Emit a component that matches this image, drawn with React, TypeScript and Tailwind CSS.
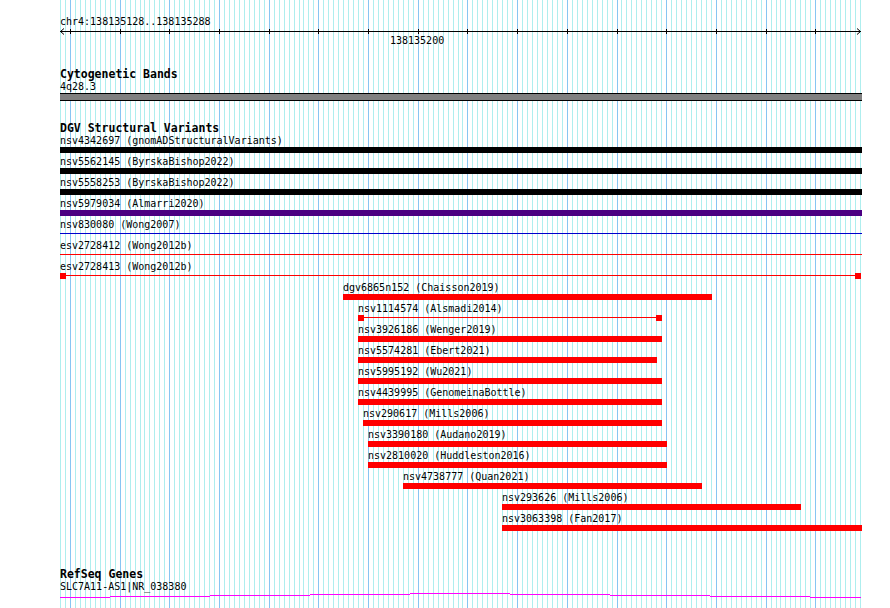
import React from 'react';

const VIEW_LEFT = 60;
const PX_PER_BP = 800 / 161;

// one vertical line per base, a darker one every 10 bp
const gridLines = Array.from({ length: 162 }, (_, k) => ({
  x: VIEW_LEFT + Math.round(k * PX_PER_BP),
  major: k % 10 === 2,
}));

type Feature = {
  name: string;
  source: string;
  start: number;
  end: number;
  color: string;
  style: 'bar' | 'line' | 'ends';
};

const variants: Feature[] = [
  { name: 'nsv4342697', source: 'gnomADStructuralVariants', start: 60, end: 862, color: '#000000', style: 'bar' },
  { name: 'nsv5562145', source: 'ByrskaBishop2022', start: 60, end: 862, color: '#000000', style: 'bar' },
  { name: 'nsv5558253', source: 'ByrskaBishop2022', start: 60, end: 862, color: '#000000', style: 'bar' },
  { name: 'nsv5979034', source: 'Almarri2020', start: 60, end: 862, color: '#4b0082', style: 'bar' },
  { name: 'nsv830080', source: 'Wong2007', start: 60, end: 862, color: '#0000cd', style: 'line' },
  { name: 'esv2728412', source: 'Wong2012b', start: 60, end: 862, color: '#ff0000', style: 'line' },
  { name: 'esv2728413', source: 'Wong2012b', start: 60, end: 861, color: '#ff0000', style: 'ends' },
  { name: 'dgv6865n152', source: 'Chaisson2019', start: 343, end: 712, color: '#ff0000', style: 'bar' },
  { name: 'nsv1114574', source: 'Alsmadi2014', start: 358, end: 662, color: '#ff0000', style: 'ends' },
  { name: 'nsv3926186', source: 'Wenger2019', start: 358, end: 662, color: '#ff0000', style: 'bar' },
  { name: 'nsv5574281', source: 'Ebert2021', start: 358, end: 657, color: '#ff0000', style: 'bar' },
  { name: 'nsv5995192', source: 'Wu2021', start: 358, end: 662, color: '#ff0000', style: 'bar' },
  { name: 'nsv4439995', source: 'GenomeinaBottle', start: 358, end: 662, color: '#ff0000', style: 'bar' },
  { name: 'nsv290617', source: 'Mills2006', start: 363, end: 662, color: '#ff0000', style: 'bar' },
  { name: 'nsv3390180', source: 'Audano2019', start: 368, end: 667, color: '#ff0000', style: 'bar' },
  { name: 'nsv2810020', source: 'Huddleston2016', start: 368, end: 667, color: '#ff0000', style: 'bar' },
  { name: 'nsv4738777', source: 'Quan2021', start: 403, end: 702, color: '#ff0000', style: 'bar' },
  { name: 'nsv293626', source: 'Mills2006', start: 502, end: 801, color: '#ff0000', style: 'bar' },
  { name: 'nsv3063398', source: 'Fan2017', start: 502, end: 862, color: '#ff0000', style: 'bar' },
];

// RefSeq intron line, drawn as the browser draws it: flat steps
const geneSteps: [number, number, number][] = [
  [60, 110, 5], [110, 210, 4], [210, 310, 3], [310, 410, 2], [410, 510, 1],
  [510, 610, 2], [610, 710, 3], [710, 810, 4], [810, 861, 5],
];

function Glyph({ f }: { f: Feature }) {
  const box = { marginLeft: f.start, width: f.end - f.start };
  if (f.style === 'bar') {
    return <div className="h-[6px]" style={{ ...box, backgroundColor: f.color }} />;
  }
  if (f.style === 'line') {
    return (
      <div className="h-[6px] pt-[2px]" style={box}>
        <div className="h-px" style={{ backgroundColor: f.color }} />
      </div>
    );
  }
  return (
    <div className="flex h-[6px]" style={box}>
      <div className="w-[6px] h-[6px]" style={{ backgroundColor: f.color }} />
      <div className="flex-1 h-px mt-[2px]" style={{ backgroundColor: f.color }} />
      <div className="w-[6px] h-[6px]" style={{ backgroundColor: f.color }} />
    </div>
  );
}

function TrackTitle({ children, className = '' }: { children: React.ReactNode; className?: string }) {
  return <h2 className={`pl-[60px] font-bold text-[11.5px] leading-[12px] ${className}`}>{children}</h2>;
}

export default function App() {
  return (
    <div className="relative w-[890px] h-[608px] overflow-hidden bg-white text-black font-['DejaVu_Sans_Mono',monospace] text-[10px] leading-[11px]">
      {/* base grid */}
      <svg className="absolute inset-0" width={890} height={608} shapeRendering="crispEdges">
        {gridLines.map((g) => (
          <line
            key={g.x}
            x1={g.x + 0.5}
            x2={g.x + 0.5}
            y1={0}
            y2={608}
            stroke={g.major ? '#87c6f2' : '#aeeeee'}
            strokeWidth={1}
          />
        ))}
      </svg>

      <div className="relative whitespace-nowrap">
        {/* ruler */}
        <div className="pt-[16px] pl-[60px]">chr4:138135128..138135288</div>
        <svg className="block" width={890} height={8}>
          <line x1={60} x2={861} y1={4.5} y2={4.5} stroke="#000" strokeWidth={1} shapeRendering="crispEdges" />
          {gridLines.filter((g) => g.major).map((g) => (
            <line key={g.x} x1={g.x + 0.5} x2={g.x + 0.5} y1={2} y2={7} stroke="#000" shapeRendering="crispEdges" />
          ))}
          <polyline points="64,1.5 60.5,4.5 64,7.5" fill="none" stroke="#000" strokeWidth={1} />
          <polyline points="857,1.5 860.5,4.5 857,7.5" fill="none" stroke="#000" strokeWidth={1} />
        </svg>
        <div className="pl-[390px]">138135200</div>

        {/* cytogenetic bands */}
        <TrackTitle className="mt-[22px]">Cytogenetic Bands</TrackTitle>
        <div className="mt-[1px] pl-[60px]">4q28.3</div>
        <div className="mt-[1px] ml-[60px] w-[802px] h-[8px] border-y border-black bg-[#808080]" />

        {/* DGV */}
        <TrackTitle className="mt-[21px]">DGV Structural Variants</TrackTitle>
        <div className="mt-[1px]">
          {variants.map((f) => (
            <div key={f.name} className="h-[21px]">
              <div style={{ paddingLeft: f.start }}>
                {f.name} ({f.source})
              </div>
              <div className="mt-[1px]">
                <Glyph f={f} />
              </div>
            </div>
          ))}
        </div>

        {/* RefSeq */}
        <TrackTitle className="mt-[34px]">RefSeq Genes</TrackTitle>
        <div className="mt-[1px] pl-[60px]">SLC7A11-AS1|NR_038380</div>
        <svg className="block" width={890} height={8} shapeRendering="crispEdges">
          {geneSteps.map(([x1, x2, y]) => (
            <line key={x1} x1={x1} x2={x2} y1={y + 0.5} y2={y + 0.5} stroke="#ff00ff" strokeWidth={1} />
          ))}
        </svg>
      </div>
    </div>
  );
}
